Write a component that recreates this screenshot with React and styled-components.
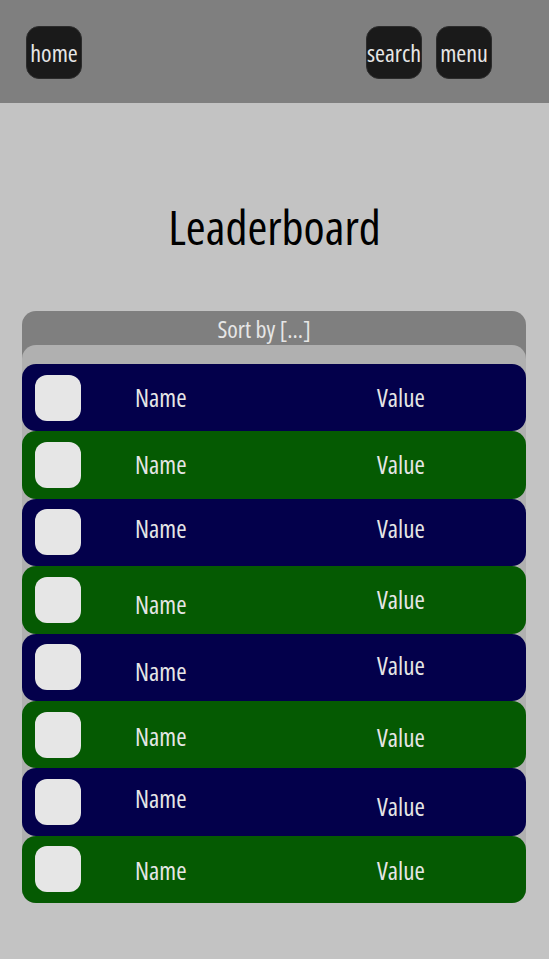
import React from "react";
import styled, { createGlobalStyle } from "styled-components";

const GlobalStyle = createGlobalStyle`
  html, body {
    margin: 0;
    padding: 0;
    background: #c3c3c3;
  }
  body {
    font-family: "Open Sans", "Roboto", sans-serif;
    font-stretch: condensed;
    font-weight: 500;
  }
`;

const Page = styled.div`
  min-height: 959px;
  background: #c3c3c3;
`;

const TopBar = styled.header`
  height: 103px;
  background: #7f7f7f;
  display: flex;
  align-items: flex-start;
  padding: 26px 57px 0 26px;
  box-sizing: border-box;
  gap: 14px;
`;

const NavButton = styled.button`
  width: 56px;
  height: 53px;
  padding: 0;
  border: 1px solid #2c2c2c;
  border-radius: 13px;
  background: #1a1a1a;
  color: #e6e6e6;
  font-family: inherit;
  font-stretch: condensed;
  font-weight: 500;
  font-size: 24px;
  white-space: nowrap;
  display: flex;
  align-items: center;
  justify-content: center;
  overflow: visible;
  margin-left: ${(p) => (p.$push ? "auto" : "0")};
`;

const Title = styled.h1`
  margin: 0;
  padding: 98px 0 58px;
  text-align: center;
  font-size: 48px;
  font-weight: 500;
  color: #000;
  line-height: 52px;
`;

const Board = styled.section`
  margin: 0 23px 0 22px;
  background: #7f7f7f;
  border-radius: 14px;
`;

const SortBar = styled.div`
  height: 34px;
  padding-right: 20px;
  display: flex;
  align-items: center;
  justify-content: center;
  color: #e6e6e6;
  font-size: 24px;
`;

const List = styled.div`
  background: #b0b0b0;
  border-radius: 14px;
  padding-top: 19px;
`;

const Row = styled.div`
  height: 67.4px;
  border-radius: 14px;
  background: ${(p) => (p.$alt ? "#055a02" : "#03004b")};
  display: grid;
  grid-template-columns: 113px 242px 1fr;
  align-items: center;
  color: #e6e6e6;
  font-size: 25px;
`;

const Avatar = styled.div`
  width: 46px;
  height: 46px;
  margin-left: 13px;
  border-radius: 12px;
  background: #e6e6e6;
`;

const Cell = styled.span`
  position: relative;
  top: ${(p) => (p.$shift || 0) - 1}px;
`;

const rows = [
  [0, 0],
  [0, 0],
  [-3, -3],
  [5, 0],
  [5, -1],
  [2, 3],
  [-3, 5],
  [2, 2],
];

export default function App() {
  return (
    <Page>
      <GlobalStyle />
      <TopBar>
        <NavButton>home</NavButton>
        <NavButton $push>search</NavButton>
        <NavButton>menu</NavButton>
      </TopBar>
      <Title>Leaderboard</Title>
      <Board>
        <SortBar>Sort by [...]</SortBar>
        <List>
          {rows.map(([n, v], i) => (
            <Row key={i} $alt={i % 2 === 1}>
              <Avatar />
              <Cell $shift={n}>Name</Cell>
              <Cell $shift={v}>Value</Cell>
            </Row>
          ))}
        </List>
      </Board>
    </Page>
  );
}
